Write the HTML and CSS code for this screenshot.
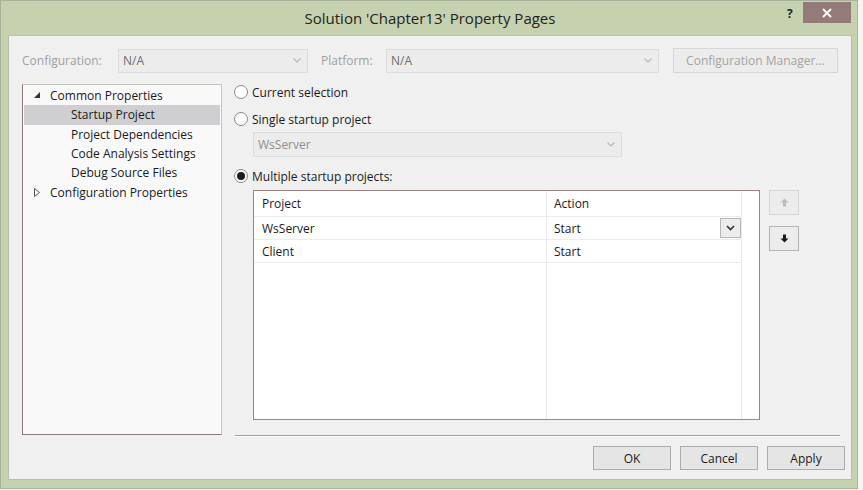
FILE: index.html
```html
<!DOCTYPE html>
<html>
<head>
<meta charset="utf-8">
<link rel="stylesheet" href="styles.css">
</head>
<body>
<div class="window">
  <div class="titlebar">
    <div class="title">Solution 'Chapter13' Property Pages</div>
    <div class="help">?</div>
    <div class="close">
      <svg width="10" height="10" viewBox="0 0 10 10"><path d="M1 1 L9 9 M9 1 L1 9" stroke="#fff" stroke-width="1.8"/></svg>
    </div>
  </div>
  <div class="client">
    <div class="config-row">
      <span class="lbl lbl-config">Configuration:</span>
      <div class="combo combo-config disabled"><span>N/A</span><svg class="chev" width="8" height="5" viewBox="0 0 8 5"><path d="M0.5 0.5 L4 4 L7.5 0.5" stroke="#b8b8b8" fill="none" stroke-width="1.2"/></svg></div>
      <span class="lbl lbl-platform">Platform:</span>
      <div class="combo combo-platform disabled"><span>N/A</span><svg class="chev" width="8" height="5" viewBox="0 0 8 5"><path d="M0.5 0.5 L4 4 L7.5 0.5" stroke="#b8b8b8" fill="none" stroke-width="1.2"/></svg></div>
      <div class="btn btn-cfgmgr disabled">Configuration Manager...</div>
    </div>
    <div class="main">
      <div class="tree">
        <div class="node lvl0"><svg class="tri" width="7" height="7" viewBox="0 0 7 7"><path d="M6 0 L6 6 L0 6 Z" fill="#333"/></svg>Common Properties</div>
        <div class="node lvl1 selected">Startup Project</div>
        <div class="node lvl1">Project Dependencies</div>
        <div class="node lvl1">Code Analysis Settings</div>
        <div class="node lvl1">Debug Source Files</div>
        <div class="node lvl0"><svg class="tri" width="7" height="9" viewBox="0 0 7 9"><path d="M0.5 0.5 L5.5 4.5 L0.5 8.5 Z" fill="none" stroke="#555"/></svg>Configuration Properties</div>
      </div>
      <div class="pane">
        <div class="radio-row"><span class="radio"></span>Current selection</div>
        <div class="radio-row"><span class="radio"></span>Single startup project</div>
        <div class="combo combo-single disabled"><span>WsServer</span><svg class="chev" width="8" height="5" viewBox="0 0 8 5"><path d="M0.5 0.5 L4 4 L7.5 0.5" stroke="#b8b8b8" fill="none" stroke-width="1.2"/></svg></div>
        <div class="radio-row radio-multi"><span class="radio checked"></span>Multiple startup projects:</div>
        <div class="grid-area">
          <div class="grid">
            <div class="grow ghead"><div class="c1">Project</div><div class="c2">Action</div><div class="c3"></div></div>
            <div class="grow"><div class="c1">WsServer</div><div class="c2">Start<span class="ddbtn"><svg width="9" height="6" viewBox="0 0 9 6"><path d="M1 1 L4.5 4.5 L8 1" stroke="#333" fill="none" stroke-width="1.6"/></svg></span></div><div class="c3"></div></div>
            <div class="grow"><div class="c1">Client</div><div class="c2">Start</div><div class="c3"></div></div>
            <div class="grow gfill"><div class="c1"></div><div class="c2"></div><div class="c3"></div></div>
          </div>
          <div class="movebtns">
            <div class="mbtn disabled"><svg width="9" height="9" viewBox="0 0 9 9"><path d="M4.5 0.5 L8.5 4.5 L6 4.5 L6 8.5 L3 8.5 L3 4.5 L0.5 4.5 Z" fill="#bcbcbc"/></svg></div>
            <div class="mbtn"><svg width="9" height="9" viewBox="0 0 9 9"><path d="M4.5 8.5 L8.5 4.5 L6 4.5 L6 0.5 L3 0.5 L3 4.5 L0.5 4.5 Z" fill="#1a1a1a"/></svg></div>
          </div>
        </div>
      </div>
    </div>
    <div class="footer">
      <div class="separator"></div>
      <div class="buttons">
        <div class="btn btn-dlg">OK</div>
        <div class="btn btn-dlg">Cancel</div>
        <div class="btn btn-dlg">Apply</div>
      </div>
    </div>
  </div>
</div>
</body>
</html>
```

FILE: styles.css
```css
html, body {
  margin: 0;
  padding: 0;
  background: #f4f4f2;
  width: 863px;
  height: 490px;
  overflow: hidden;
}
body {
  font-family: "Open Sans", "Noto Sans", sans-serif;
  font-size: 12px;
  color: #1a1a1a;
}
.window {
  box-sizing: border-box;
  width: 858px;
  height: 489px;
  background: #c6d1b0;
  border: 1px solid #a8b39a;
  padding: 0 5px 8px 7px;
  display: flex;
  flex-direction: column;
}
.titlebar {
  height: 34px;
  flex: none;
  display: flex;
  align-items: flex-start;
}
.title {
  flex: 1;
  text-align: center;
  font-size: 15px;
  color: #222;
  padding-top: 7px;
  padding-left: 65px;
  white-space: nowrap;
}
.help {
  font-size: 12px;
  font-weight: bold;
  color: #222;
  padding-top: 4px;
  width: 16px;
  flex: none;
}
.close {
  flex: none;
  width: 48px;
  height: 21px;
  margin-top: 1px;
  margin-right: 1px;
  background: #947a79;
  display: flex;
  align-items: center;
  justify-content: center;
}
.client {
  flex: 1;
  background: #f0f0f0;
  border: 1px solid #b8bfae;
  display: flex;
  flex-direction: column;
  padding: 12px 12px 9px 13px;
}
.config-row {
  display: flex;
  align-items: center;
  height: 25px;
}
.config-row > * { flex: none; }
.lbl {
  color: #a0a0a0;
}
.lbl-config { width: 96px; }
.lbl-platform { margin-left: 13px; width: 65px; }
.combo {
  box-sizing: border-box;
  height: 24px;
  border: 1px solid #dcdcdc;
  background: #ececec;
  display: flex;
  align-items: center;
  justify-content: space-between;
  padding: 0 6px 0 4px;
}
.combo.disabled span { color: #8e8e8e; }
.combo-config { width: 190px; }
.combo-config span, .combo-platform span { color: #6d6d6d !important; }
.combo-platform { width: 273px; }
.btn {
  box-sizing: border-box;
  border: 1px solid #acacac;
  background: #e5e5e5;
  display: flex;
  align-items: center;
  justify-content: center;
}
.btn-cfgmgr {
  margin-left: 14px;
  width: 165px;
  height: 25px;
  color: #a3a3a3;
  border-color: #d6d6d6;
  background: #ececec;
}
.main {
  display: flex;
  margin-top: 11px;
  flex: 1;
}
.tree {
  box-sizing: border-box;
  width: 200px;
  height: 351px;
  background: #f9f9f9;
  border-left: 1px solid #8f7777;
  border-bottom: 1px solid #8f7777;
  border-top: 1px solid #c4c8bc;
  border-right: 1px solid #c4c8bc;
  padding-top: 1px;
  flex: none;
}
.node {
  height: 19.3px;
  line-height: 19px;
  display: flex;
  align-items: center;
  white-space: nowrap;
}
.lvl0 { padding-left: 10px; }
.lvl1 { padding-left: 48px; }
.tri { width: 9px; margin-right: 8px; flex: none; }
.node.selected { background: #cfcfd1; margin: 0 1px; padding-left: 47px; }
.pane {
  flex: 1;
  margin-left: 12px;
  margin-top: -1px;
  display: flex;
  flex-direction: column;
}
.radio-row {
  display: flex;
  align-items: center;
  height: 18px;
}
.radio-row + .radio-row { margin-top: 9px; }
.radio {
  box-sizing: border-box;
  width: 14px;
  height: 14px;
  border-radius: 50%;
  border: 1px solid #8a8a8a;
  background: #fdfdfd;
  margin-right: 4px;
  flex: none;
  display: flex;
  align-items: center;
  justify-content: center;
}
.radio.checked::after {
  content: "";
  width: 8px;
  height: 8px;
  border-radius: 50%;
  background: #1e1e1e;
}
.combo-single {
  width: 369px;
  margin-left: 19px;
  margin-top: 4px;
  height: 25px;
}
.radio-multi { margin-top: 10px; }
.grid-area {
  display: flex;
  align-items: flex-start;
  margin-top: 5px;
  margin-left: 19px;
}
.grid {
  box-sizing: border-box;
  width: 507px;
  height: 230px;
  background: #fff;
  border: 1px solid #9a8383;
  border-bottom-color: #8d8d88;
  display: flex;
  flex-direction: column;
  flex: none;
}
.grow {
  display: flex;
  height: 23px;
  flex: none;
}
.grow.ghead { height: 26px; }
.grow.gfill { flex: 1; }
.c1, .c2, .c3 {
  box-sizing: border-box;
  display: flex;
  align-items: center;
  border-right: 1px solid #ececec;
  border-bottom: 1px solid #ececec;
}
.c1 { width: 293px; padding-left: 8px; }
.c2 { width: 195px; padding-left: 7px; position: relative; }
.c3 { flex: 1; border-right: none; border-bottom: none; }
.gfill .c1, .gfill .c2 { border-bottom: none; }
.ddbtn {
  position: absolute;
  right: 0;
  top: 1px;
  box-sizing: border-box;
  width: 21px;
  height: 20px;
  border: 1px solid #b5b5b5;
  background: #ececec;
  display: flex;
  align-items: center;
  justify-content: center;
}
.movebtns {
  display: flex;
  flex-direction: column;
  margin-left: 9px;
}
.mbtn {
  box-sizing: border-box;
  width: 30px;
  height: 25px;
  border: 1px solid #b4b4b4;
  background: #ececec;
  display: flex;
  align-items: center;
  justify-content: center;
}
.mbtn.disabled { border-color: #d6d6d6; }
.mbtn + .mbtn { margin-top: 11px; }
.footer {
  display: flex;
  flex-direction: column;
}
.separator {
  margin-left: 213px;
  margin-right: -1px;
  margin-top: 0;
  height: 1px;
  background: #a0a0a0;
  border-bottom: 1px solid #fff;
}
.buttons {
  display: flex;
  justify-content: flex-end;
  gap: 9px;
  margin-top: 9px;
  margin-right: -6px;
}
.btn-dlg {
  width: 78px;
  height: 24px;
  font-size: 12px;
  color: #1a1a1a;
}
```
